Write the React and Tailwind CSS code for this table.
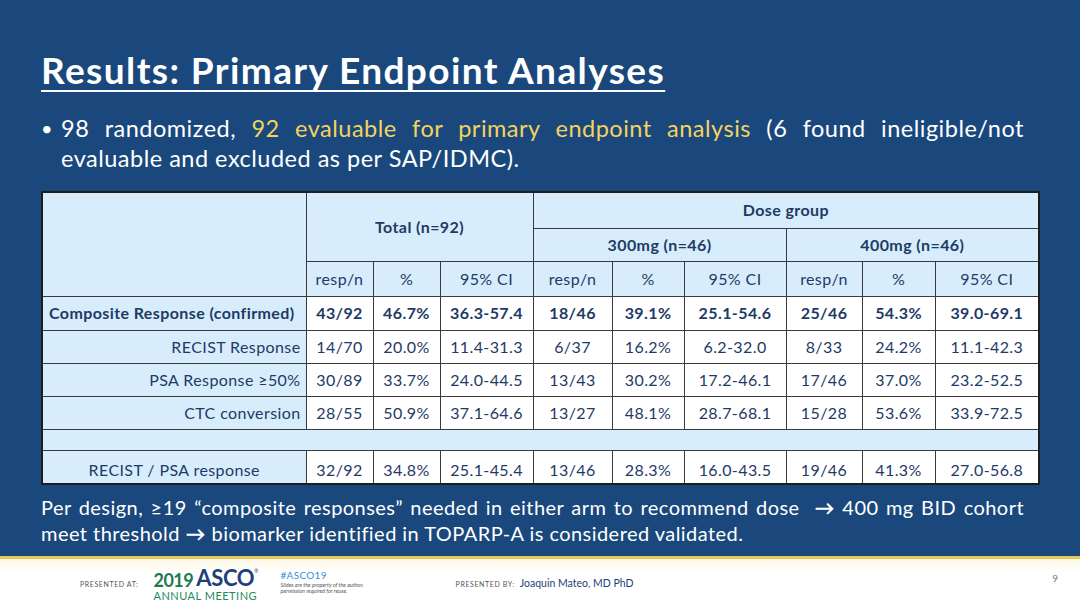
const cols = [264, 67, 67, 93, 79, 72, 102, 76, 73, 104]

const rows = [
  { label: 'Composite Response (confirmed)', bold: true, h: 34, vals: ['43/92', '46.7%', '36.3-57.4', '18/46', '39.1%', '25.1-54.6', '25/46', '54.3%', '39.0-69.1'] },
  { label: 'RECIST Response', h: 33, vals: ['14/70', '20.0%', '11.4-31.3', '6/37', '16.2%', '6.2-32.0', '8/33', '24.2%', '11.1-42.3'] },
  { label: 'PSA Response ≥50%', h: 33, vals: ['30/89', '33.7%', '24.0-44.5', '13/43', '30.2%', '17.2-46.1', '17/46', '37.0%', '23.2-52.5'] },
  { label: 'CTC conversion', h: 33, vals: ['28/55', '50.9%', '37.1-64.6', '13/27', '48.1%', '28.7-68.1', '15/28', '53.6%', '33.9-72.5'] },
]

const last = { label: 'RECIST / PSA response', vals: ['32/92', '34.8%', '25.1-45.4', '13/46', '28.3%', '16.0-43.5', '19/46', '41.3%', '27.0-56.8'] }

const cell = 'border border-[#3a3a3a] text-center align-middle'
const hd = 'bg-[#d8edfb]'

export default function App() {
  return (
    <div
      className="w-[1080px] h-[608px] overflow-hidden flex flex-col bg-white"
      style={{ fontFamily: 'Lato, "Open Sans", sans-serif' }}
    >
      <div className="bg-[#1a487c] h-[556px] flex flex-col px-[41px] text-white">
        <h1 className="mt-[48px] text-[37px] leading-[44px] font-bold tracking-[1.4px] underline underline-offset-[6px] decoration-[2px]">
          Results: Primary Endpoint Analyses
        </h1>
        <div className="mt-[21px] flex text-[23.5px] leading-[30px] pr-[15px] tracking-[0.5px]">
          <span className="w-[20px] shrink-0 text-[20px]">•</span>
          <div className="flex-1">
            <p className="text-justify [text-align-last:justify]">
              98 randomized, <span className="text-[#f4d35e]">92 evaluable for primary endpoint analysis</span> (6 found ineligible/not
            </p>
            <p>evaluable and excluded as per SAP/IDMC).</p>
          </div>
        </div>

        <table className="mt-[18px] border-collapse table-fixed w-[997px] text-[16px] tracking-[0.4px] text-[#1e3a66] border-2 border-[#1e1e1e]">
          <colgroup>
            {cols.map((w, i) => (
              <col key={i} style={{ width: w }} />
            ))}
          </colgroup>
          <tbody>
            <tr className="h-[36px]">
              <td rowSpan={3} className={`${cell} ${hd}`}></td>
              <td rowSpan={2} colSpan={3} className={`${cell} ${hd} font-bold`}>Total (n=92)</td>
              <td colSpan={6} className={`${cell} ${hd} font-bold`}>Dose group</td>
            </tr>
            <tr className="h-[33px]">
              <td colSpan={3} className={`${cell} ${hd} font-bold`}>300mg (n=46)</td>
              <td colSpan={3} className={`${cell} ${hd} font-bold`}>400mg (n=46)</td>
            </tr>
            <tr className="h-[35px]">
              {['resp/n', '%', '95% CI', 'resp/n', '%', '95% CI', 'resp/n', '%', '95% CI'].map((t, i) => (
                <td key={i} className={`${cell} ${hd}`}>{t}</td>
              ))}
            </tr>
            {rows.map((r) => (
              <tr key={r.label} style={{ height: r.h }} className={r.bold ? 'font-bold' : ''}>
                <td className={`${cell} ${hd} ${r.bold ? 'text-left pl-[6px]' : 'text-right pr-[5px]'}`}>{r.label}</td>
                {r.vals.map((v, i) => (
                  <td key={i} className={`${cell} bg-white`}>{v}</td>
                ))}
              </tr>
            ))}
            <tr className="h-[21px]">
              <td colSpan={10} className={`${cell} ${hd}`}></td>
            </tr>
            <tr className="h-[34px]">
              <td className={`${cell} ${hd} pt-[6px]`}>{last.label}</td>
              {last.vals.map((v, i) => (
                <td key={i} className={`${cell} bg-white pt-[6px]`}>{v}</td>
              ))}
            </tr>
          </tbody>
        </table>

        <div className="mt-[9px] pr-[15px] text-[20px] leading-[26px] tracking-[0.45px]">
          <p className="text-justify [text-align-last:justify]">
            Per design, ≥19 “composite responses” needed in either arm to recommend dose&nbsp; <span className="font-bold">→</span> 400 mg BID cohort
          </p>
          <p>
            meet threshold <span className="font-bold">→</span> biomarker identified in TOPARP-A is considered validated.
          </p>
        </div>
      </div>
      <div className="h-[3px] bg-[#e7c65a]"></div>
      <div className="flex-1 bg-gradient-to-b from-[#fdf8e6] to-white to-[30%] flex items-center pl-[80px] pr-[22px]">
        <span className="text-[7px] tracking-[0.6px] text-[#555] mt-[2px]">PRESENTED AT:</span>
        <div className="ml-[15px] flex flex-col leading-none">
          <div className="flex items-end">
            <span className="text-[18px] text-[#1c7a50] font-bold tracking-[-0.5px]">2019</span>
            <span className="ml-[3px] text-[22px] text-[#1d3f7a] font-bold tracking-[-0.3px]">ASCO</span>
            <span className="text-[5px] text-[#1d3f7a] self-start mt-[2px]">®</span>
          </div>
          <span className="text-[11px] text-[#1e8a5a] tracking-[0.5px] mt-[1px]">ANNUAL MEETING</span>
        </div>
        <div className="ml-[22px] flex flex-col leading-none mb-[3px]">
          <span className="text-[10px] text-[#3a8fcf] tracking-[0.3px]">#ASCO19</span>
          <span className="text-[5.5px] italic text-[#555] mt-[3px]">Slides are the property of the author,</span>
          <span className="text-[5.5px] italic text-[#555] mt-[1px]">permission required for reuse.</span>
        </div>
        <span className="ml-[92px] text-[7px] tracking-[0.6px] text-[#555] mt-[2px]">PRESENTED BY:</span>
        <span className="ml-[5px] text-[10.5px] text-[#1d3f7a]">Joaquin Mateo, MD PhD</span>
        <span className="ml-auto text-[10px] text-[#777] mb-[10px]">9</span>
      </div>
    </div>
  )
}
